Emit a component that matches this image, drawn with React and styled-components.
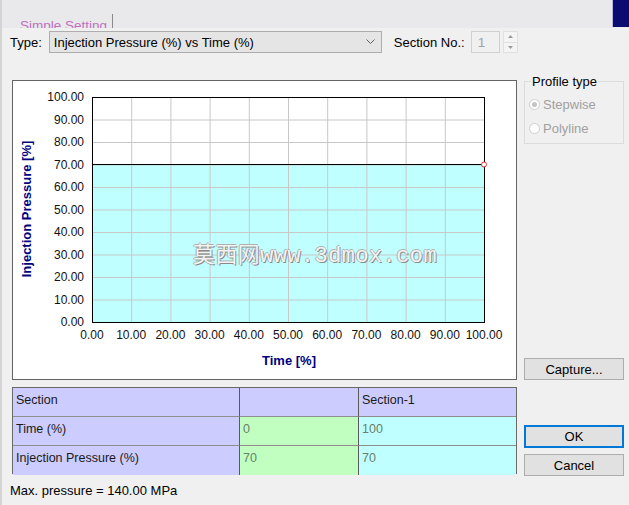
import React from "react";
import styled, { createGlobalStyle } from "styled-components";

const GlobalStyle = createGlobalStyle`
  html, body {
    margin: 0;
    padding: 0;
    background: #f0f0f0;
  }
  body {
    font-family: "Liberation Sans", Arial, sans-serif;
    font-size: 13px;
    color: #000;
  }
`;

const Window = styled.div`
  width: 629px;
  height: 505px;
  overflow: hidden;
  background: #f0f0f0;
  border-left: 2px solid #d4d4d4;
  box-sizing: border-box;
`;

const TopStrip = styled.div`
  height: 28px;
  background: #e9e9ec;
  display: flex;
  align-items: flex-end;
  justify-content: space-between;
  padding-left: 10px;
`;

const Tab = styled.div`
  width: 101px;
  height: 14px;
  overflow: hidden;
  border-right: 1px solid #8a8a8a;
  color: #c070c0;
  font-size: 13.5px;
  line-height: 13px;
  padding: 5px 0 0 8px;
  box-sizing: border-box;
`;

const NavyCorner = styled.div`
  align-self: flex-start;
  width: 16px;
  height: 27px;
  background: #0b0b72;
  border-left: 1px solid #b8b8d8;
`;

const TypeRow = styled.div`
  display: flex;
  align-items: center;
  height: 22px;
  margin-top: 3px;
  padding-left: 8px;
`;

const Label = styled.span`
  margin-right: ${(p) => p.$gap || 6}px;
`;

const Select = styled.div`
  width: 333px;
  height: 22px;
  box-sizing: border-box;
  background: #e5e5e5;
  border: 1px solid #adadad;
  display: flex;
  align-items: center;
  justify-content: space-between;
  padding: 0 6px 0 4px;
  margin-right: 12px;
`;

const NumberBox = styled.div`
  width: 29px;
  height: 22px;
  box-sizing: border-box;
  border: 1px solid #d0d0d0;
  background: #f0f0f0;
  color: #a0a0a0;
  padding: 3px 0 0 6px;
  font-size: 13.5px;
  margin-left: 2px;
`;

const Spinner = styled.div`
  width: 15px;
  height: 22px;
  margin-left: 3px;
  display: flex;
  flex-direction: column;
  border: 1px solid #e0e0e0;
  box-sizing: border-box;
`;

const SpinHalf = styled.div`
  flex: 1;
  display: flex;
  align-items: center;
  justify-content: center;
  background: #f4f4f4;
  & + & {
    border-top: 1px solid #e0e0e0;
  }
`;

const Main = styled.div`
  display: grid;
  grid-template-columns: 505px 100px;
  grid-template-rows: 300px 87px;
  column-gap: 7px;
  row-gap: 7px;
  padding-left: 10px;
  margin-top: 27px;
`;

const ChartBox = styled.div`
  position: relative;
  background: #fff;
  border: 1px solid #646464;
  box-sizing: border-box;
`;

const Watermark = styled.div`
  position: absolute;
  left: 180px;
  top: 155px;
  font-family: "Liberation Mono", "Noto Sans CJK SC", monospace;
  font-size: 22px;
  letter-spacing: 0.4px;
  color: #f2f4f4;
  text-shadow: 1px 1px 0 #8a8a8a, -1px 0 0 #b0b0b0, 0 -1px 0 #b0b0b0;
  white-space: nowrap;
  pointer-events: none;
`;

const SideColumn = styled.div`
  display: flex;
  flex-direction: column;
  justify-content: space-between;
`;

const Group = styled.fieldset`
  margin: -6px 0 0 0;
  padding: 3px 0 6px 4px;
  border: 1px solid #dcdcdc;
  height: 70px;
  box-sizing: border-box;
  legend {
    padding: 0 1px;
    margin-left: 2px;
  }
`;

const RadioRow = styled.div`
  display: flex;
  align-items: center;
  height: 24px;
  color: #a0a0a0;
`;

const RadioDot = styled.span`
  width: 11px;
  height: 11px;
  border-radius: 50%;
  border: 1px solid #cfcfcf;
  background: #fff;
  margin-right: 3px;
  box-sizing: border-box;
  display: flex;
  align-items: center;
  justify-content: center;
  &::after {
    content: "";
    width: 5px;
    height: 5px;
    border-radius: 50%;
    background: ${(p) => (p.$checked ? "#c4c4c4" : "transparent")};
  }
`;

const Button = styled.div`
  height: ${(p) => (p.$primary ? 23 : 22)}px;
  box-sizing: border-box;
  background: #e1e1e1;
  border: ${(p) => (p.$primary ? "2px solid #0078d7" : "1px solid #adadad")};
  display: flex;
  align-items: center;
  justify-content: center;
`;

const Table = styled.div`
  display: grid;
  grid-template-columns: 227px 119px 157px;
  grid-template-rows: repeat(3, 29px);
  border: 1px solid #6a6a6a;
  box-sizing: border-box;
`;

const Cell = styled.div`
  background: ${(p) => p.$bg};
  color: ${(p) => (p.$data ? "#6a806a" : "#1a1a1a")};
  padding: 5px 0 0 3px;
  border-bottom: ${(p) => (p.$last ? "none" : "1px solid #8e8e8e")};
  border-right: ${(p) => (p.$end ? "none" : "1px solid #5a5a5a")};
  font-size: 12.5px;
  box-sizing: border-box;
`;

const ButtonColumn = styled.div`
  display: flex;
  flex-direction: column;
  justify-content: flex-end;
  gap: 6px;
  margin-bottom: -2px;
`;

const Footer = styled.div`
  padding: 9px 0 0 8px;
`;

const LAV = "#ccccff";
const GREEN = "#c0ffc0";
const CYAN = "#c0ffff";

const Chart = () => {
  const px0 = 79;
  const py0 = 16;
  const pw = 392;
  const ph = 225;
  const ticks = Array.from({ length: 11 }, (_, i) => i);
  const y70 = py0 + ph * 0.3;
  return (
    <svg width="503" height="298" style={{ display: "block" }}>
      <rect x={px0} y={y70} width={pw} height={ph * 0.7} fill="#c0ffff" />
      {ticks.slice(1, 10).map((i) => (
        <g key={i} stroke="#c8c8c8" strokeWidth="1">
          <line x1={px0 + (pw * i) / 10 + 0.5} y1={py0} x2={px0 + (pw * i) / 10 + 0.5} y2={py0 + ph} />
          <line x1={px0} y1={py0 + (ph * i) / 10 + 0.5} x2={px0 + pw} y2={py0 + (ph * i) / 10 + 0.5} />
        </g>
      ))}
      <line x1={px0} y1={y70} x2={px0 + pw} y2={y70} stroke="#000" />
      <rect x={px0 + 0.5} y={py0 + 0.5} width={pw} height={ph} fill="none" stroke="#000" />
      <circle cx={px0 + pw} cy={y70} r="2.5" fill="#fff" stroke="#e03030" />
      <g fontFamily="Liberation Sans, Arial, sans-serif" fontSize="12" fill="#111">
        {ticks.map((i) => (
          <text key={"y" + i} x={px0 - 8} y={py0 + ph - (ph * i) / 10 + 4} textAnchor="end">
            {(i * 10).toFixed(2)}
          </text>
        ))}
        {ticks.map((i) => (
          <text key={"x" + i} x={px0 + (pw * i) / 10} y={258} textAnchor="middle">
            {(i * 10).toFixed(2)}
          </text>
        ))}
      </g>
      <g fontFamily="Liberation Sans, Arial, sans-serif" fontSize="13" fontWeight="bold" fill="#000080">
        <text x="276" y="284" textAnchor="middle">Time [%]</text>
        <text x="0" y="0" textAnchor="middle" transform="translate(18 128) rotate(-90)">
          Injection Pressure [%]
        </text>
      </g>
    </svg>
  );
};

export default function App() {
  return (
    <>
      <GlobalStyle />
      <Window>
        <TopStrip>
          <Tab>Simple Setting</Tab>
          <NavyCorner />
        </TopStrip>
        <TypeRow>
          <Label $gap={7}>Type:</Label>
          <Select>
            <span>Injection Pressure (%) vs Time (%)</span>
            <svg width="9" height="6" viewBox="0 0 9 6">
              <path d="M0.5 0.5 L4.5 4.5 L8.5 0.5" fill="none" stroke="#606060" strokeWidth="1" />
            </svg>
          </Select>
          <Label $gap={4}>Section No.:</Label>
          <NumberBox>1</NumberBox>
          <Spinner>
            <SpinHalf>
              <svg width="5" height="3"><path d="M0 3 L2.5 0 L5 3 Z" fill="#9a9a9a" /></svg>
            </SpinHalf>
            <SpinHalf>
              <svg width="5" height="3"><path d="M0 0 L2.5 3 L5 0 Z" fill="#9a9a9a" /></svg>
            </SpinHalf>
          </Spinner>
        </TypeRow>
        <Main>
          <ChartBox>
            <Chart />
            <Watermark>莫西网www.3dmox.com</Watermark>
          </ChartBox>
          <SideColumn>
            <Group>
              <legend>Profile type</legend>
              <RadioRow>
                <RadioDot $checked />
                Stepwise
              </RadioRow>
              <RadioRow>
                <RadioDot />
                Polyline
              </RadioRow>
            </Group>
            <Button>Capture...</Button>
          </SideColumn>
          <Table>
            <Cell $bg={LAV}>Section</Cell>
            <Cell $bg={LAV}></Cell>
            <Cell $bg={LAV} $end>Section-1</Cell>
            <Cell $bg={LAV}>Time (%)</Cell>
            <Cell $bg={GREEN} $data>0</Cell>
            <Cell $bg={CYAN} $data $end>100</Cell>
            <Cell $bg={LAV} $last>Injection Pressure (%)</Cell>
            <Cell $bg={GREEN} $data $last>70</Cell>
            <Cell $bg={CYAN} $data $last $end>70</Cell>
          </Table>
          <ButtonColumn>
            <Button $primary>OK</Button>
            <Button>Cancel</Button>
          </ButtonColumn>
        </Main>
        <Footer>Max. pressure = 140.00 MPa</Footer>
      </Window>
    </>
  );
}
